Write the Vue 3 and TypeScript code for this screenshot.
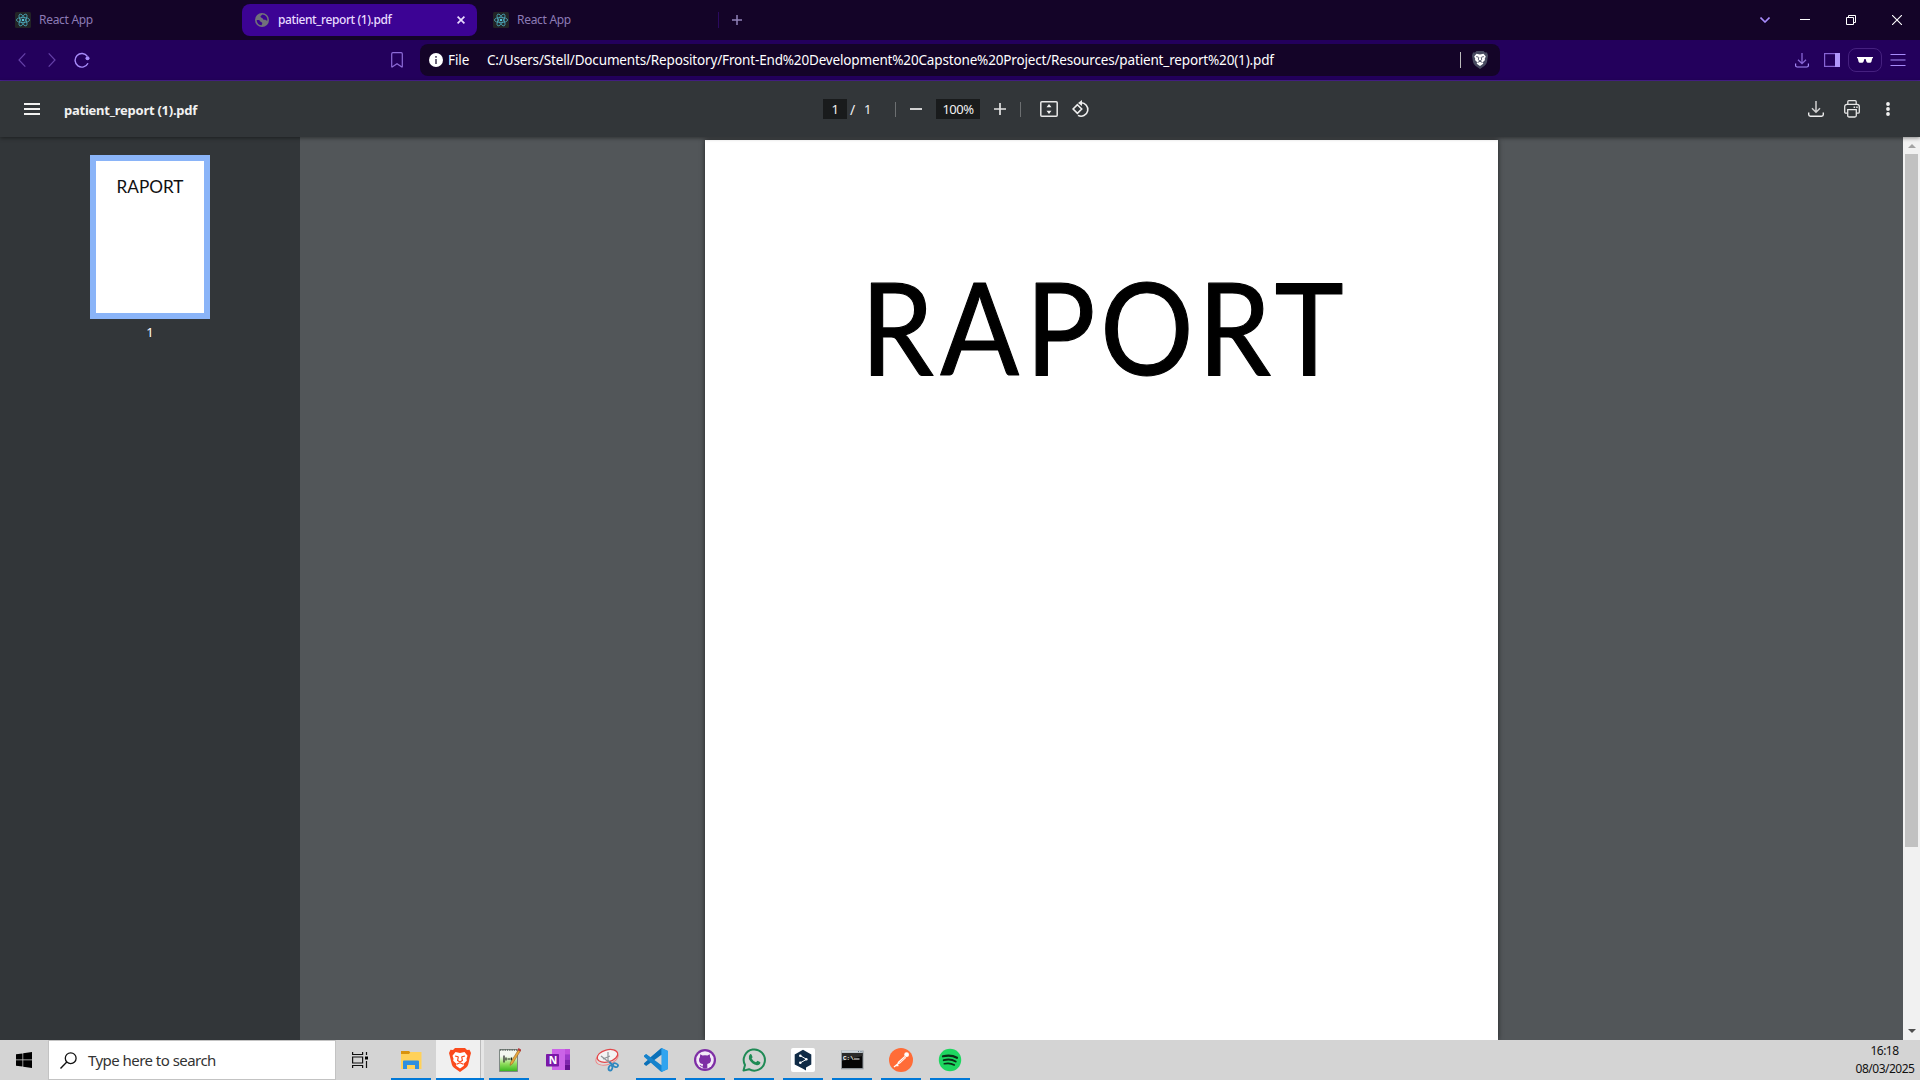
<script setup lang="ts">
import { ref } from 'vue'

const fileName = 'patient_report (1).pdf'
const address =
  'C:/Users/Stell/Documents/Repository/Front-End%20Development%20Capstone%20Project/Resources/patient_report%20(1).pdf'
const page = ref(1)
const zoom = ref(100)
const orbits = [0, 60, 120]
</script>

<template>
  <div class="screen">
    <header class="tabs">
      <div class="tab first">
        <svg class="react" viewBox="0 0 16 16" width="16" height="16">
          <rect width="16" height="16" rx="1.5" fill="#222426" />
          <ellipse v-for="o in orbits" :key="o" cx="8" cy="8" rx="6.6" ry="2.6" fill="none" stroke="#4aa3b5" stroke-width=".85" :transform="`rotate(${o} 8 8)`" />
          <circle cx="8" cy="8" r="1.3" fill="#55c4da" />
        </svg>
        <span class="tab-text">React App</span>
      </div>
      <div class="tab active">
        <svg viewBox="0 0 14 14" width="14" height="14">
          <circle cx="7" cy="7" r="7" fill="#71717a" />
          <path d="M1.6 7.2c1.8-.4 3 0 3.800 1.200.5.8 1.700.4 1.900 1.500.1.900-.7 1.300-.6 2.400C4 12.200 1.800 10.200 1.600 7.200ZM7.200 1.600c-.3 1.100-1.800 1-1.700 2.200.1 1.100 1.800.7 2.200 1.700.3.900 1 1.300 2 1.200 1.100-.1 1.400 1 2.700.7C12.600 4.200 10.300 1.700 7.200 1.600Z" fill="#3c0394" />
        </svg>
        <span class="tab-text">{{ fileName }}</span>
        <svg class="close" viewBox="0 0 8 8" width="8" height="8"><path d="M.6.6l6.800 6.800M7.400.6L.6 7.400" stroke="#e9dcff" stroke-width="1.700" /></svg>
      </div>
      <div class="tab last">
        <svg class="react" viewBox="0 0 16 16" width="16" height="16">
          <rect width="16" height="16" rx="1.5" fill="#222426" />
          <ellipse v-for="o in orbits" :key="o" cx="8" cy="8" rx="6.6" ry="2.6" fill="none" stroke="#4aa3b5" stroke-width=".85" :transform="`rotate(${o} 8 8)`" />
          <circle cx="8" cy="8" r="1.3" fill="#55c4da" />
        </svg>
        <span class="tab-text">React App</span>
      </div>
      <i class="tab-sep"></i>
      <svg class="plus" viewBox="0 0 10 10" width="10" height="10"><path d="M5 0v10M0 5h10" stroke="#9082b8" stroke-width="1.500" /></svg>
      <div class="window-buttons">
        <svg viewBox="0 0 10 6" width="10" height="6"><path d="M.5.5L5 5 9.500.5" fill="none" stroke="#a78bfa" stroke-width="1.600" /></svg>
        <svg viewBox="0 0 10 10" width="10" height="10"><path d="M0 4.500h10" stroke="#fff" /></svg>
        <svg viewBox="0 0 10 10" width="10" height="10"><path d="M.5 2.500h7v7h-7zM2.500 2.500v-2h7v7h-2" fill="none" stroke="#fff" /></svg>
        <svg viewBox="0 0 10 10" width="10" height="10"><path d="M0 0l10 10M10 0L0 10" stroke="#fff" stroke-width="1.100" /></svg>
      </div>
    </header>

    <nav class="nav">
      <svg class="back" viewBox="0 0 8 14" width="8" height="14"><path d="M7.300.4L1 7l6.300 6.600" fill="none" stroke="#6540a8" stroke-width="1.200" /></svg>
      <svg class="forward" viewBox="0 0 8 14" width="8" height="14"><path d="M.7.4L7 7 .7 13.600" fill="none" stroke="#6540a8" stroke-width="1.200" /></svg>
      <svg class="reload" viewBox="0 0 16 16" width="16" height="16"><path d="M13.400 4.300A6.800 6.800 0 1 0 14 11.300" fill="none" stroke="#a78bfa" stroke-width="1.400" /><circle cx="13.500" cy="6.200" r="2" fill="#a78bfa" /></svg>
      <svg class="bookmark" viewBox="0 0 12 16" width="12" height="16"><path d="M.7 1.900q0-1.200 1.200-1.200h8.200q1.200 0 1.200 1.200v12.600q0 .9-.8.300L6 11.700 1.500 14.800q-.8.600-.8-.3z" fill="none" stroke="#8d6bd8" stroke-width="1.200" /></svg>
      <div class="address">
        <svg viewBox="0 0 14 14" width="14" height="14"><circle cx="7" cy="7" r="7" fill="#fff" /><path d="M7 3v1.800M7 5.900V11" stroke="#5d546c" stroke-width="1.800" /></svg>
        <span class="scheme">File</span>
        <span class="url">{{ address }}</span>
        <i class="address-sep"></i>
        <svg class="shield" viewBox="0 0 16 18" width="16" height="18">
          <path d="M4.500 0h7l1.500 1.600 2-.2 1 3-1 6.600q-.6 2.500-2.700 3.900L8 18l-4.300-3.100Q1.600 13.500 1 11L0 4.400l1-3 2 .2z" fill="#484b60" />
          <path d="M4.500 2.800L8 3.400l3.500-.6 2.300 2.700-1.100 2.300.3 1.300-2 1.900.2 1.700L8 15l-3.200-2.300.2-1.700L3 9.100l.3-1.300-1.100-2.300z" fill="#fff" />
          <path d="M4.200 5.600l2.200.5M11.800 5.600l-2.200.5M6.800 6.200l-.5 2.600L8 10l1.700-1.200-.5-2.600M5.500 11.500L8 10.300l2.500 1.200" fill="none" stroke="#484b60" stroke-width=".9" />
        </svg>
      </div>
      <svg class="dl" viewBox="0 0 14 15" width="14" height="15"><path d="M7 0v10.500M3 6.800l4 3.900 4-3.900" fill="none" stroke="#8764d4" stroke-width="1.300" /><path d="M.6 10.500v2q0 1.500 1.500 1.500h9.800q1.500 0 1.500-1.500v-2" fill="none" stroke="#a78bfa" stroke-width="1.200" /></svg>
      <svg class="panel" viewBox="0 0 16 14" width="16" height="14"><rect x=".6" y=".6" width="14.800" height="12.800" fill="none" stroke="#8764d4" stroke-width="1.200" /><path d="M11 0h5v14h-5z" fill="#b197fc" /></svg>
      <div class="private">
        <svg viewBox="0 0 16 6" width="16" height="6"><path d="M0 0h16v1.300h-.8L14.500 4.500q-.3 1.200-1.500 1.200h-2q-1.200 0-1.600-1.200L8.600 2H7.400L6.600 4.500Q6.200 5.700 5 5.700H3q-1.200 0-1.500-1.200L.8 1.300H0z" fill="#fff" /></svg>
      </div>
      <svg class="menu" viewBox="0 0 16 12" width="16" height="12"><path d="M.5 .500h15M.5 6h15M.5 11.500h15" stroke="#a78bfa" stroke-width="1.200" /></svg>
    </nav>

    <div class="toolbar">
      <svg class="burger" viewBox="0 0 16 12" width="16" height="12"><path d="M0 1h16M0 6h16M0 11h16" stroke="#f1f1f1" stroke-width="2" /></svg>
      <strong class="doc-title">{{ fileName }}</strong>
      <span class="field page-field">{{ page }}</span>
      <span class="slash">/</span>
      <span class="total">1</span>
      <i class="tool-sep"></i>
      <svg class="minus" viewBox="0 0 12 12" width="12" height="12"><path d="M0 6h12" stroke="#e4e4e4" stroke-width="1.800" /></svg>
      <span class="field zoom-field">{{ zoom }}%</span>
      <svg class="zoom-in" viewBox="0 0 12 12" width="12" height="12"><path d="M0 6h12M6 0v12" stroke="#e4e4e4" stroke-width="1.700" /></svg>
      <i class="tool-sep second"></i>
      <svg class="fit" viewBox="0 0 18 16" width="18" height="16"><rect x=".8" y=".8" width="16.400" height="14.400" rx="1" fill="none" stroke="#e8e8e8" stroke-width="1.500" /><path d="M9 3l2.500 3.200h-5zM9 13l2.500-3.200h-5z" fill="#f1f1f1" /></svg>
      <svg class="rotate" viewBox="0 0 18 18" width="18" height="18"><path d="M5.400 4.700L9.700 9l-4.300 4.300L1.100 9z" fill="none" stroke="#eee" stroke-width="1.600" /><path d="M8.800 2.800A6.700 6.700 0 1 1 6 15.400" fill="none" stroke="#eee" stroke-width="1.600" /><path d="M6 3l4-3v6z" fill="#eee" /></svg>
      <div class="actions">
        <svg viewBox="0 0 16 16" width="16" height="16"><path d="M8 0v11M4 7.300l4 3.900 4-3.900" fill="none" stroke="#cfcfcf" stroke-width="1.500" /><path d="M.7 11.500v2q0 1.700 1.700 1.700h11.200q1.700 0 1.700-1.700v-2" fill="none" stroke="#eee" stroke-width="1.400" /></svg>
        <svg viewBox="0 0 16 18" width="16" height="18"><g fill="none" stroke="#e6e6e6" stroke-width="1.300"><path d="M3.800 4.300V1.700q0-1 1-1h6.400q1 0 1 1v2.600M3.500 13.200H2q-1.300 0-1.300-1.300V6.600Q.7 4.400 3 4.400h10q2.300 0 2.300 2.200v5.300q0 1.300-1.300 1.300h-1.500" /><path d="M3.700 9.600h8.600v5.900q0 1.500-1.500 1.500H5.200q-1.500 0-1.500-1.500z" /></g><path d="M9.600 6.600h1.500v1.300H9.600zM12.200 6.600h1.500v1.300h-1.500z" fill="#e6e6e6" /></svg>
        <svg viewBox="0 0 4 14" width="4" height="14"><g fill="#f1f1f1"><circle cx="2" cy="2" r="1.900" /><circle cx="2" cy="7" r="1.900" /><circle cx="2" cy="12" r="1.900" /></g></svg>
      </div>
    </div>

    <main class="viewer">
      <aside class="sidebar">
        <div class="thumb">
          <svg viewBox="0 0 108 152" width="108" height="152"><text class="heading" x="20.500" y="32" font-size="17.500" textLength="67" lengthAdjust="spacingAndGlyphs">RAPORT</text></svg>
        </div>
        <span class="thumb-no">1</span>
      </aside>
      <section class="canvas">
        <article class="sheet">
          <svg viewBox="0 0 793 300" width="793" height="300">
            <text class="heading big" transform="scale(.91 1)" x="171.200 258.400 352.200 434.300 541.800 626" y="235.400" font-size="128">RAPORT</text>
          </svg>
        </article>
      </section>
      <div class="scrollbar">
        <svg viewBox="0 0 8 4" width="8" height="4"><path d="M0 4l4-4 4 4z" fill="#a3a3a3" /></svg>
        <i class="scroll-thumb"></i>
        <svg class="down" viewBox="0 0 8 4" width="8" height="4"><path d="M0 0l4 4 4-4z" fill="#505050" /></svg>
      </div>
    </main>

    <footer class="taskbar">
      <div class="start">
        <svg viewBox="0 0 16 16" width="16" height="16"><path d="M0 2.300L6.500 1.400v6.200H0zM7.200 1.300L16 0v7.600H7.200zM0 8.300h6.500v6.300L0 13.700zM7.200 8.300H16V16l-8.800-1.200z" /></svg>
      </div>
      <div class="search">
        <svg viewBox="0 0 17 17" width="17" height="17"><circle cx="10.700" cy="6.200" r="5.400" fill="none" stroke="#111" stroke-width="1.300" /><path d="M6.800 10L.5 16.400" stroke="#111" stroke-width="1.400" /></svg>
        <span>Type here to search</span>
      </div>
      <div class="task view">
        <svg viewBox="0 0 16 16" width="16" height="16"><path d="M.6 0v2.500h10V0M.6 5h10v6H.6zM.6 16v-2.500h10V16M14.500 0v3M14.500 9v7" fill="none" stroke="#111" stroke-width="1.200" /><path d="M13 4.500h3v3h-3z" /></svg>
      </div>
      <div class="task open">
        <svg viewBox="0 0 24 24" width="24" height="24"><path d="M2 3h8l2 2v4H2z" fill="#d9930d" /><path d="M2 6h8l1.500-2H22.500v17H2z" fill="#ffd15a" /><path d="M4 13.500q0-1 1-1h14q1 0 1 1V21h-4v-4H8v4H4z" fill="#2e8fe0" /></svg>
      </div>
      <div class="task open current">
        <svg viewBox="0 0 24 24" width="24" height="24"><path d="M7 0h10l2 2 2.500-.2L23 5l-.8 3-2 8.500q-.5 2-2.200 3.300L12 24l-6-4.200q-1.700-1.300-2.200-3.300L1.800 8 1 5l1.500-3.200L5 2z" fill="#fb4a1c" /><path d="M7.500 4L12 5l4.500-1 3 3.700-1 3 .3 2-3.200 3 .3 2L12 20.500 8.100 17.700l.3-2-3.200-3 .3-2-1-3z" fill="#fff" /><path d="M7 8l3.500.8M17 8l-3.500.8M10.300 9l-.7 3.500L12 14l2.400-1.500-.7-3.500M8.700 16.200L12 14.700l3.300 1.500" fill="none" stroke="#fb4a1c" stroke-width="1.200" /></svg>
      </div>
      <div class="task open">
        <svg viewBox="0 0 24 24" width="24" height="24"><defs><linearGradient id="note" x1="0" y1="0" x2="0" y2="1"><stop offset=".3" stop-color="#f4f8f0" /><stop offset=".65" stop-color="#8fdd5c" /><stop offset="1" stop-color="#36b51c" /></linearGradient></defs><path d="M2.500 1.500h18v22h-18z" fill="url(#note)" stroke="#7e8883" /><path d="M3 2h17" stroke="#57605b" stroke-width="1.500" stroke-dasharray="1.300 1" /><path d="M7 7.500v7M9 9.500v3M10.500 11h3M14.500 9.500v3" stroke="#222" stroke-width="1.200" /><path d="M21.500 1.500l2 1.200-8 13-2.500 1.700.6-3z" fill="#e9a83a" stroke="#94632c" stroke-width=".6" /><path d="M21 1l2.800 1.500" stroke="#b53a3a" stroke-width="2" /></svg>
      </div>
      <div class="task">
        <svg viewBox="0 0 24 24" width="24" height="24"><path d="M6 1h18v21H6z" fill="#cb63e8" /><path d="M19 1h5v5.300h-5z" fill="#c050dd" /><path d="M19 6.300h5v5.200h-5z" fill="#9c38c9" /><path d="M19 11.500h5v5.200h-5z" fill="#7f25ae" /><path d="M19 16.700h5V22h-5z" fill="#63118f" /><rect y="6" width="13" height="12.500" rx=".8" fill="#7a18a8" /><text x="2.700" y="16" class="letter">N</text></svg>
      </div>
      <div class="task">
        <svg viewBox="0 0 24 24" width="24" height="24"><ellipse cx="12" cy="10" rx="11.500" ry="6.500" fill="#ddd" stroke="#e88" transform="rotate(-18 12 10)" /><ellipse cx="12.500" cy="8" rx="10.500" ry="6" fill="#f3f3f3" stroke="#e2474a" stroke-width="1.200" transform="rotate(-15 12 8)" /><path d="M13 4v8l3 4M8 11l7-3M6 8l9 7" fill="none" stroke="#909498" stroke-width="1.200" /><g fill="none" stroke="#2e87bf" stroke-width="1.800"><ellipse cx="15.500" cy="20" rx="1.800" ry="2.600" transform="rotate(20 15.500 20)" /><ellipse cx="20.500" cy="17" rx="2.600" ry="1.800" transform="rotate(20 20 17)" /><path d="M14.500 14l3 3" /></g></svg>
      </div>
      <div class="task open">
        <svg viewBox="0 0 24 24" width="24" height="24"><path d="M17.500 0L24 3v18l-6.500 3L.8 8.600 0 7.800 2 6.200 6.200 9.600z" fill="#1f8ad2" /><path d="M17.500 0v6.600L2.200 18 0 16.300v-1.100z" fill="#0b70b8" /><path d="M0 8.800V7.700l2.200-1.600L17.500 17.500V24z" fill="#1683cc" /><path d="M17.500 0L24 3v18l-6.500 3z" fill="#30a4ef" /><path d="M17.500 6.800v10.400L10.500 12z" fill="#d5d5d5" /></svg>
      </div>
      <div class="task open">
        <svg viewBox="0 0 24 24" width="24" height="24"><circle cx="12" cy="12" r="11" fill="#7e2ea5" /><circle cx="12" cy="12" r="8.800" fill="#f3e9f8" /><path d="M7.300 6.300l2.200 1.200q2.500-.6 5 0l2.200-1.200.4 2.900q1.200 1.400.8 3.700-.5 2.600-3.600 3.100v4.300q-2.300.8-4.600 0V18.600Q7.300 19.200 6.500 16.700q1.500.2 2.300 1.200.5.100 1-.2l.2-1.600q-3.300-.5-3.900-3.200-.4-2.300.8-3.700z" fill="#7e2ea5" /></svg>
      </div>
      <div class="task open">
        <svg viewBox="0 0 24 24" width="24" height="24"><path d="M1.500 22.600l1.500-5.500A10.600 10.600 0 1 1 7 21.200z" fill="none" stroke="#1f8a55" stroke-width="2" stroke-linejoin="round" /><path d="M8 6.300q.9-.5 1.500.2l1 2.400q.1.500-.9 1.700 1.500 2.800 4.400 3.700l1.400-1.600 2.700 1.300q.5.300.1 1.600-.9 1.900-3.300 1.700-5.200-.8-8-6.200Q6 8.300 8 6.300z" fill="#1f8a55" /></svg>
      </div>
      <div class="task open">
        <svg viewBox="0 0 24 24" width="24" height="24"><rect width="24" height="24" rx="2" fill="#fff" /><path d="M12 1.800l8.300 4.700v10L15 19.500v3l-3-1.800-8.300-4.300V6.500z" fill="#102b46" /><path d="M9 7.500l6.500 3.800L9 15" fill="none" stroke="#fff" stroke-width="1" /><g fill="#fff"><circle cx="9.300" cy="7.800" r="1.300" /><circle cx="15.300" cy="11.300" r="1.300" /><circle cx="9.300" cy="14.800" r="1.300" /></g></svg>
      </div>
      <div class="task open">
        <svg viewBox="0 0 24 24" width="24" height="24"><path d="M1 2.500h22.500v18.800H1z" fill="#8f969b" /><path d="M1.500 2.500h21v2.300h-21z" fill="#cbd3da" /><path d="M18 3.600h1M20.500 3.600h1" stroke="#567" /><path d="M2 5h20.500v15H2z" fill="#050505" /><path d="M2 5h20.500v3L2 13z" fill="#2a2a2a" /><text x="3" y="11.500" class="prompt">C:\</text><path d="M14 11h5.500" stroke="#fff" stroke-width="1" /></svg>
      </div>
      <div class="task open">
        <svg viewBox="0 0 24 24" width="24" height="24"><circle cx="12" cy="12" r="12" fill="#ff6c37" /><circle cx="17.600" cy="6.700" r="2.400" fill="#fff" /><path d="M15.500 8l1.800 1.800-6.500 6-2.500-1.300z" fill="#fff" /><path d="M5 19l5.500-4.500M6.500 17.300l3 .2" stroke="#fff" stroke-width="1.300" /><path d="M10.500 14.500l6-5.500" stroke="#ff8f66" stroke-width=".7" /></svg>
      </div>
      <div class="task open">
        <svg viewBox="0 0 24 24" width="24" height="24"><circle cx="12" cy="12" r="11.200" fill="#1ed760" /><g fill="none" stroke="#0b2d17" stroke-linecap="round"><path d="M5 8.300q8-2 14 1.500" stroke-width="2.200" /><path d="M5.700 12.200q6.800-1.800 12 1.300" stroke-width="1.900" /><path d="M6.300 15.800q5.700-1.300 10 1.200" stroke-width="1.600" /></g></svg>
      </div>
      <div class="clock"><span>16:18</span><span class="date">08/03/2025</span></div>
    </footer>
  </div>
</template>

<style>
body { margin: 0; overflow: hidden; }
</style>

<style scoped>
.screen { width: 1920px; height: 1080px; display: flex; flex-direction: column; overflow: hidden; background: #525659; font-family: "Noto Sans", "Open Sans", sans-serif; font-size: 12px; }
.screen * { box-sizing: border-box; }
svg { display: block; flex: none; }
span, strong { white-space: nowrap; flex: none; }
.tabs { flex: none; height: 40px; background: #140428; display: flex; align-items: center; }
.tab { display: flex; align-items: center; height: 32px; flex: none; color: #8c7bb5; }
.tab-text { margin-left: 8px; letter-spacing: -.3px; padding-bottom: 1px; }
.first { width: 242px; padding-left: 15px; }
.active { width: 235px; padding: 0 12px 0 13px; background: #3c0394; border-radius: 8px; color: #e9dcff; }
.active .tab-text { margin-left: 9px; letter-spacing: -.41px; font-weight: 500; }
.close { margin-left: auto; }
.last { width: 241px; padding-left: 16px; }
.tab-sep { width: 1px; height: 16px; background: #2b0a5f; }
.plus { margin-left: 13px; }
.window-buttons { display: flex; align-items: center; margin: 0 18px 0 auto; }
.window-buttons svg:nth-child(2) { margin-left: 30px; }
.window-buttons svg:nth-child(3), .window-buttons svg:nth-child(4) { margin-left: 36px; }

.nav { flex: none; height: 41px; background: #23005c; border-bottom: 1px solid #4a2091; display: flex; align-items: center; }
.back { margin-left: 18px; }
.forward { margin-left: 22px; }
.reload { margin-left: 18px; }
.bookmark { margin-left: 301px; }
.address { margin-left: 17px; width: 1080px; height: 32px; border-radius: 8px; background: #140428; display: flex; align-items: center; padding: 0 12px 0 9px; color: #fff; font-size: 13.500px; }
.scheme { width: 39px; margin-left: 5px; letter-spacing: -.1px; }
.url { letter-spacing: -.16px; width: 973px; }
.address-sep { width: 1px; height: 16px; background: #bbb; }
.shield { margin-left: 11px; }
.dl { margin-left: 295px; }
.panel { margin-left: 15px; }
.private { width: 34px; height: 24px; margin-left: 8px; border: 1px solid #45207f; border-radius: 8px; display: flex; align-items: center; justify-content: center; }
.menu { margin-left: 8px; }

.toolbar { flex: none; height: 56px; background: #323639; color: #f1f1f1; display: flex; align-items: center; position: relative; z-index: 1; box-shadow: 0 1px 4px rgba(0, 0, 0, .45); }
.burger { margin-left: 24px; }
.doc-title { margin-left: 24px; width: 759px; padding-top: 1px; font-size: 13px; font-weight: 700; letter-spacing: -.25px; }
.field { background: #191b1c; height: 20px; line-height: 20px; text-align: center; font-size: 13px; letter-spacing: -.5px; }
.page-field { width: 24px; }
.slash { width: 14px; margin-left: 3px; font-size: 14px; }
.total { width: 31px; font-size: 13px; }
.tool-sep { width: 1px; height: 15px; background: #6c6f71; }
.minus { margin-left: 14px; }
.zoom-field { width: 44px; margin-left: 14px; }
.zoom-in { margin-left: 14px; }
.second { margin-left: 14px; }
.fit { margin-left: 19px; }
.rotate { margin-left: 14px; }
.actions { margin: 0 30px 0 auto; display: flex; align-items: center; }
.actions svg:nth-child(2) { margin-left: 20px; }
.actions svg:nth-child(3) { margin-left: 26px; }

.viewer { flex: none; height: 903px; display: flex; overflow: hidden; }
.sidebar { width: 300px; background: #323639; display: flex; flex-direction: column; align-items: center; padding-top: 18px; }
.thumb { border: 6px solid #8ab4f8; background: #fff; }
.thumb-no { margin-top: 5px; color: #fff; font-size: 13px; line-height: 17px; }
.canvas { flex: 1; padding: 3px 0 0 405px; background: #525659; }
.sheet { width: 793px; height: 900px; background: #fff; box-shadow: 0 0 5px rgba(0, 0, 0, .6); }
.heading { font-family: Lato, sans-serif; fill: #111; }
.big { fill: #000; stroke: #000; stroke-width: 1.2; stroke-linejoin: round; }
.scrollbar { width: 17px; background: #f1f1f1; display: flex; flex-direction: column; align-items: center; padding: 7px 0; }
.scroll-thumb { width: 13px; height: 693px; margin-top: 6px; background: #c1c1c1; }
.down { margin-top: auto; }

.taskbar { flex: none; height: 40px; background: #d4d4d4; display: flex; }
.start { width: 49px; display: flex; align-items: center; padding-left: 16px; }
.search { width: 286px; height: 38px; margin-top: 1px; background: #fff; display: flex; align-items: center; padding-left: 11px; box-shadow: 0 0 0 1px #c3c3c3; color: #333; }
.search span { margin-left: 11px; font-size: 15px; letter-spacing: -.54px; }
.task { width: 40px; margin-left: 9px; display: flex; align-items: center; justify-content: center; flex: none; border-bottom: 2px solid transparent; padding-top: 2px; }
.view { margin-left: 5px; width: 40px; margin-right: 2px; }
.open { border-bottom-color: #0078d7; }
.current { width: 48px; margin-left: 5px; margin-right: -4px; background: linear-gradient(90deg, #f0f0f0 44px, #bbb 44px, #bbb 45px, #e6e6e6 45px); }
.letter { font: 700 10.500px "Open Sans", sans-serif; fill: #fff; }
.prompt { font: 700 6px "Liberation Mono", monospace; fill: #fff; }
.clock { width: 64px; margin-left: auto; display: flex; flex-direction: column; align-items: center; padding-top: 2px; line-height: 18px; color: #111; letter-spacing: -.5px; margin-right: 3px; }
.clock span:first-child { margin-right: 1px; }
</style>
